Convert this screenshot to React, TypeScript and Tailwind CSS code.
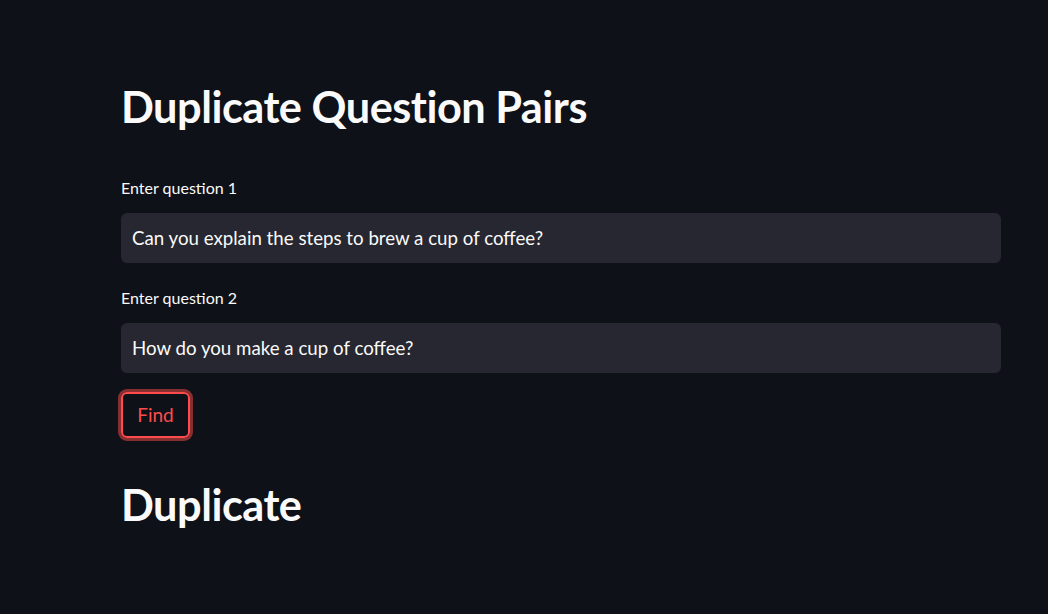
const App = () => {
  return (
    <div className="min-h-screen bg-[#0e1117] text-[#fafafa] font-['Lato',sans-serif]">
      <div className="w-[880px] ml-[121px] pt-[82px]">
        <h1 className="text-[43.3px] leading-[48px] font-bold tracking-[-0.5px]">
          Duplicate Question Pairs
        </h1>

        <p className="mt-[48px] text-[16px] leading-[20px]">Enter question 1</p>
        <div className="mt-[15px] h-[50px] rounded-md bg-[#262730] px-[11px] flex items-center text-[18.7px]">
          Can you explain the steps to brew a cup of coffee?
        </div>

        <p className="mt-[25px] text-[16px] leading-[20px]">Enter question 2</p>
        <div className="mt-[15px] h-[50px] rounded-md bg-[#262730] px-[11px] flex items-center text-[18.7px]">
          How do you make a cup of coffee?
        </div>

        <button className="mt-[19px] w-[69px] h-[46px] rounded-md border-2 border-[#ff4b4b] bg-transparent text-[#ff4b4b] text-[19px] shadow-[0_0_0_3px_rgba(255,75,75,0.5)]">
          Find
        </button>

        <h1 className="mt-[42px] text-[43.3px] leading-[48px] font-bold tracking-[-0.5px]">
          Duplicate
        </h1>
      </div>
    </div>
  );
};

export default App;
